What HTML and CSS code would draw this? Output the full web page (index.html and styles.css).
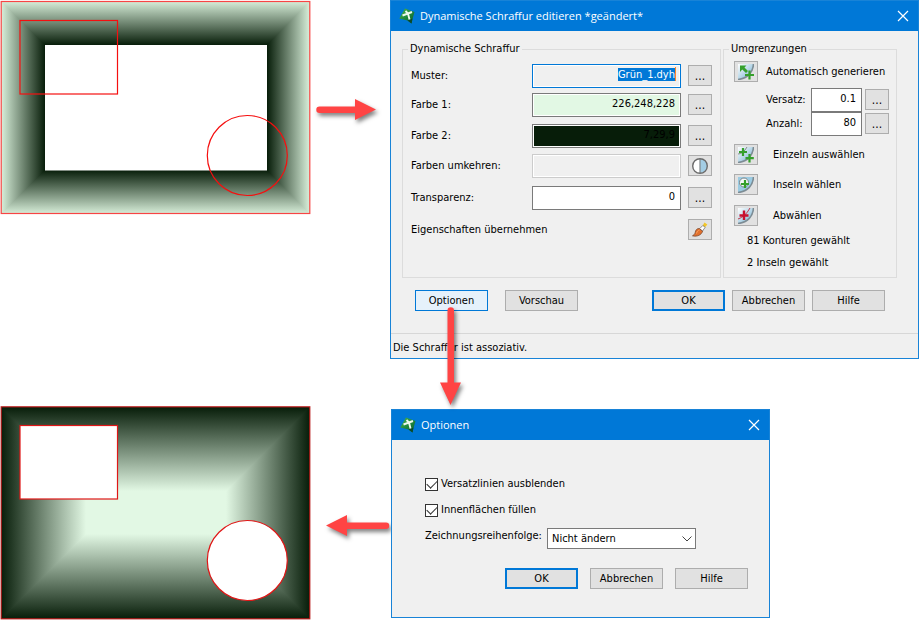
FILE: index.html
```html
<!DOCTYPE html>
<html lang="de">
<head>
<meta charset="utf-8">
<title>Dynamische Schraffur</title>
<link rel="stylesheet" href="styles.css">
</head>
<body>
<svg class="defs" aria-hidden="true">
  <defs>
    <linearGradient id="leaf" x1="0" y1="0" x2="1" y2="1"><stop offset="0" stop-color="#4fb648"/><stop offset=".5" stop-color="#1f8a3c"/><stop offset="1" stop-color="#0c5a2c"/></linearGradient>
    <linearGradient id="bluefill" x1="0" y1="0" x2="1" y2="1"><stop offset="0" stop-color="#ffffff"/><stop offset=".75" stop-color="#8fc0da"/></linearGradient>
    <symbol id="app" viewBox="0 0 16 16">
      <path d="M6 .5L15.500 4L13.500 11L12.500 15.500L8.500 12.500L.3 10.500Z" fill="url(#leaf)"/>
      <path d="M8.500 12.500L13.500 10.500L12.500 15.500Z" fill="#0b4a2b"/>
      <path d="M6.500 3L9 5.500L10.500 11.500M3.500 7.500L9 5.500L13 4" fill="none" stroke="#edf8ef" stroke-width="1.900"/>
    </symbol>
    <symbol id="close" viewBox="0 0 12 12"><path d="M1 1L11 11M11 1L1 11" fill="none" stroke="#fff" stroke-width="1.200"/></symbol>
    <symbol id="sheet" viewBox="0 0 16 16">
      <path d="M0 0H16C15.500 7 11 14 0 16Z" fill="url(#bluefill)"/>
      <path d="M15.500 0C15 8 10 14.500 0 15.500" fill="none" stroke="#7d8c94" stroke-width="1.600"/>
    </symbol>
  </defs>
</svg>
<main class="page">
  <section class="stage">
    <svg class="drawing" viewBox="0 0 312 215" role="img" aria-label="Schraffur vorher">
      <defs>
        <linearGradient id="a-t" gradientUnits="userSpaceOnUse" x1="0" y1="1" x2="0" y2="45"><stop stop-color="#d9f0db"/><stop offset="1" stop-color="#071d09"/></linearGradient>
        <linearGradient id="a-b" gradientUnits="userSpaceOnUse" x1="0" y1="214" x2="0" y2="170"><stop stop-color="#d9f0db"/><stop offset="1" stop-color="#071d09"/></linearGradient>
        <linearGradient id="a-l" gradientUnits="userSpaceOnUse" x1="1" y1="0" x2="45" y2="0"><stop stop-color="#d9f0db"/><stop offset="1" stop-color="#071d09"/></linearGradient>
        <linearGradient id="a-r" gradientUnits="userSpaceOnUse" x1="310" y1="0" x2="267" y2="0"><stop stop-color="#d9f0db"/><stop offset="1" stop-color="#071d09"/></linearGradient>
      </defs>
      <g shape-rendering="crispEdges">
        <path d="M1 1H310L267 45H45Z" fill="url(#a-t)"/>
        <path d="M1 214H310L267 170H45Z" fill="url(#a-b)"/>
        <path d="M1 1L45 45V170L1 214Z" fill="url(#a-l)"/>
        <path d="M310 1L267 45V170L310 214Z" fill="url(#a-r)"/>
      </g>
      <rect x="45" y="45" width="222" height="125.500" fill="#fff"/>
      <g fill="none" stroke="#f50f0f" stroke-width="1.200">
        <rect x="1.200" y="1.500" width="308.600" height="212" stroke="#f74545"/>
        <rect x="20" y="20.500" width="97.500" height="73.500"/>
        <circle cx="247.300" cy="155.500" r="40"/>
      </g>
    </svg>
    <svg class="arrow arrow-right" viewBox="0 0 64 30" aria-hidden="true"><path d="M4.500 7.500H40V0L61 10.500L40 21V14H4.500A3.250 3.250 0 0 1 4.500 7.500Z"/></svg>
  </section>

  <form class="dialog dialog-main">
    <header class="titlebar">
      <svg class="app-icon" aria-hidden="true"><use href="#app"/></svg>
      <h1>Dynamische Schraffur editieren *geändert*</h1>
      <button type="button" class="close" aria-label="Schließen"><svg aria-hidden="true"><use href="#close"/></svg></button>
    </header>
    <div class="panels">
      <fieldset class="hatch">
        <legend>Dynamische Schraffur</legend>
        <div class="hatch-grid">
          <label for="muster">Muster:</label>
          <span class="caret-box"><input id="muster" class="field active" value="Grün_1.dyh"></span>
          <button type="button" class="tool" aria-label="Muster wählen">...</button>

          <label for="farbe1">Farbe 1:</label>
          <input id="farbe1" class="field light" value="226,248,228">
          <button type="button" class="tool" aria-label="Farbe 1 wählen">...</button>

          <label for="farbe2">Farbe 2:</label>
          <input id="farbe2" class="field dark" value="7,29,9">
          <button type="button" class="tool" aria-label="Farbe 2 wählen">...</button>

          <label for="umkehren">Farben umkehren:</label>
          <input id="umkehren" class="field" disabled>
          <button type="button" class="tool" aria-label="Farben umkehren">
            <svg viewBox="0 0 16 16" aria-hidden="true"><circle cx="8" cy="8" r="7.400" fill="#fff"/><path d="M8 .8A7.200 7.200 0 0 1 8 15.200Z" fill="#a3cde4"/><path d="M8 1V15" stroke="#7e8589" stroke-width="1.200"/><circle cx="8" cy="8" r="7.300" fill="none" stroke="#6b6b6b" stroke-width="1.400"/></svg>
          </button>

          <label for="transparenz">Transparenz:</label>
          <input id="transparenz" class="field" value="0">
          <button type="button" class="tool" aria-label="Transparenz wählen">...</button>

          <label class="wide" for="pinsel">Eigenschaften übernehmen</label>
          <button type="button" id="pinsel" class="tool">
            <svg viewBox="0 0 16 16" aria-hidden="true"><path d="M12.500 .5L15.300 2.500L12.500 6L10.300 4.300Z" fill="#f3c626"/><path d="M10.800 3.500L13.200 5.300L10.500 9L7.500 6.800Z" fill="#fff" stroke="#777" stroke-width=".8"/><path d="M7.200 6.500C4.500 6.500 3.500 8.500 3.200 10.500C2.800 12.500 1.500 13.200 .5 13.800C5 15 9.500 13 10.600 9.200Z" fill="#e2702d" stroke="#7a4a32" stroke-width=".8"/><path d="M4.500 11.500C5 9.500 6 8.500 7.500 8" fill="none" stroke="#f7a463"/></svg>
          </button>
        </div>
      </fieldset>
      <fieldset class="bounds">
        <legend>Umgrenzungen</legend>
        <div class="bounds-grid">
          <button type="button" id="auto" class="tool">
            <svg viewBox="0 0 16 16" aria-hidden="true"><use href="#sheet"/><path d="M2 1.500H8.500L6.500 3.500L10 7L8 9L4.300 5.500L2 8Z" fill="#35a02c"/><path d="M11.500 6.500V15.500M7 11H16" stroke="#35a02c" stroke-width="2.200"/></svg>
          </button>
          <label class="near" for="auto">Automatisch generieren</label>

          <label class="sub" for="versatz">Versatz:</label>
          <input id="versatz" class="field" value="0.1">
          <button type="button" class="tool" aria-label="Versatz wählen">...</button>

          <label class="sub" for="anzahl">Anzahl:</label>
          <input id="anzahl" class="field" value="80">
          <button type="button" class="tool" aria-label="Anzahl wählen">...</button>

          <button type="button" id="einzeln" class="tool">
            <svg viewBox="0 0 16 16" aria-hidden="true"><use href="#sheet"/><path d="M0 7Q5 7 9 0" fill="none" stroke="#888"/><path d="M5 1V9M1 5H9M11.500 7V15.500M7.500 11.200H15.800" stroke="#35a02c" stroke-width="2.200"/></svg>
          </button>
          <label class="far" for="einzeln">Einzeln auswählen</label>

          <button type="button" id="inseln" class="tool">
            <svg viewBox="0 0 16 16" aria-hidden="true"><path d="M0 0H16C15.500 7 11 14 0 16Z" fill="#9bcbe2"/><path d="M15.500 0C15 8 10 14.500 0 15.500" fill="none" stroke="#7d8c94" stroke-width="1.600"/><circle cx="6" cy="5.500" r="4.500" fill="#f3f8f8" stroke="#7b8488"/><path d="M7 3V11M3 7H11" stroke="#35a02c" stroke-width="2.200"/></svg>
          </button>
          <label class="far" for="inseln">Inseln wählen</label>

          <button type="button" id="abwahl" class="tool">
            <svg viewBox="0 0 16 16" aria-hidden="true"><use href="#sheet"/><path d="M0 11Q7 9 12 0" fill="none" stroke="#c13a4b"/><path d="M6 2.500V12M1.500 7.500H10.500" stroke="#c8102e" stroke-width="2.400"/></svg>
          </button>
          <label class="far" for="abwahl">Abwählen</label>

          <p class="count">81 Konturen gewählt</p>
          <p class="count">2 Inseln gewählt</p>
        </div>
      </fieldset>
    </div>
    <div class="actions">
      <button type="button" class="btn hot">Optionen</button>
      <button type="button" class="btn">Vorschau</button>
      <div class="confirm">
        <button type="button" class="btn default">OK</button>
        <button type="button" class="btn">Abbrechen</button>
        <button type="button" class="btn">Hilfe</button>
      </div>
    </div>
    <footer class="status">Die Schraffur ist assoziativ.</footer>
    <svg class="arrow arrow-down" viewBox="0 0 30 104" aria-hidden="true"><path d="M7.500 4.500V76.500H0L10.500 99L21 76.500H14V4.500A3.250 3.250 0 0 0 7.500 4.500Z"/></svg>
  </form>

  <section class="stage">
    <svg class="drawing" viewBox="0 0 312 215" role="img" aria-label="Schraffur nachher">
      <defs>
        <linearGradient id="b-t" gradientUnits="userSpaceOnUse" x1="0" y1="1" x2="0" y2="85"><stop stop-color="#071d09"/><stop offset="1" stop-color="#e2f8e4"/></linearGradient>
        <linearGradient id="b-b" gradientUnits="userSpaceOnUse" x1="0" y1="213" x2="0" y2="128"><stop stop-color="#071d09"/><stop offset="1" stop-color="#e2f8e4"/></linearGradient>
        <linearGradient id="b-l" gradientUnits="userSpaceOnUse" x1="1" y1="0" x2="86" y2="0"><stop stop-color="#071d09"/><stop offset="1" stop-color="#e2f8e4"/></linearGradient>
        <linearGradient id="b-r" gradientUnits="userSpaceOnUse" x1="310" y1="0" x2="226" y2="0"><stop stop-color="#071d09"/><stop offset="1" stop-color="#e2f8e4"/></linearGradient>
      </defs>
      <g shape-rendering="crispEdges">
        <path d="M1 1H310L226 85H86Z" fill="url(#b-t)"/>
        <path d="M1 213H310L226 128H86Z" fill="url(#b-b)"/>
        <path d="M1 1L86 85V128L1 213Z" fill="url(#b-l)"/>
        <path d="M310 1L226 85V128L310 213Z" fill="url(#b-r)"/>
        <rect x="86" y="85" width="140" height="43" fill="#e2f8e4"/>
      </g>
      <g fill="#fff" stroke="#e01616" stroke-width="1.200">
        <rect x="1.200" y=".8" width="308.600" height="212" fill="none" stroke="#b81c1c"/>
        <rect x="20" y="19.500" width="97.500" height="73.500"/>
        <circle cx="247.300" cy="154.500" r="40"/>
      </g>
    </svg>
    <svg class="arrow arrow-left" viewBox="0 0 68 30" aria-hidden="true"><path d="M60 7.500H21V0L0 10.500L21 21V14H60A3.250 3.250 0 0 0 60 7.500Z"/></svg>
  </section>

  <form class="dialog dialog-options">
    <header class="titlebar">
      <svg class="app-icon" aria-hidden="true"><use href="#app"/></svg>
      <h2>Optionen</h2>
      <button type="button" class="close" aria-label="Schließen"><svg aria-hidden="true"><use href="#close"/></svg></button>
    </header>
    <div class="options">
      <label class="check"><input type="checkbox" checked>Versatzlinien ausblenden</label>
      <label class="check"><input type="checkbox" checked>Innenflächen füllen</label>
      <div class="order">
        <label for="order">Zeichnungsreihenfolge:</label>
        <span class="select-box">
          <select id="order"><option>Nicht ändern</option></select>
          <svg viewBox="0 0 10 6" aria-hidden="true"><path d="M.5 .5L5 5L9.500 .5" fill="none" stroke="#444"/></svg>
        </span>
      </div>
    </div>
    <div class="option-actions">
      <button type="button" class="btn default">OK</button>
      <button type="button" class="btn">Abbrechen</button>
      <button type="button" class="btn">Hilfe</button>
    </div>
  </form>
</main>
<script src="script.js"></script>
</body>
</html>
```

FILE: styles.css
```css
* {
  box-sizing: border-box;
}

body {
  margin: 0;
  background: #fff;
  color: #000;
  font-family: "DejaVu Sans Condensed", "Open Sans", sans-serif;
  font-size: 11px;
  line-height: 14px;
}

button,
input,
select {
  margin: 0;
  font: inherit;
  color: inherit;
}

.defs {
  position: absolute;
  width: 0;
  height: 0;
}

.page {
  display: grid;
  grid-template-columns: 390px minmax(0, 1fr);
  row-gap: 47px;
  align-items: start;
}

.stage {
  display: flex;
  align-items: flex-start;
}

.drawing {
  width: 312px;
  height: 215px;
  flex: none;
}

.arrow {
  fill: #ff4444;
  overflow: visible;
  filter: drop-shadow(2px 3px 2px rgba(0, 0, 0, .5));
}

.arrow-right {
  width: 64px;
  height: 30px;
  margin: 99px 0 0 3px;
}

.arrow-left {
  width: 68px;
  height: 30px;
  margin: 109px 0 0 14px;
}

.arrow-down {
  position: absolute;
  left: 49px;
  top: 305px;
  width: 30px;
  height: 104px;
  z-index: 2;
}

.dialog {
  position: relative;
  border: 1px solid #1883d7;
  background: #f0f0f0;
}

.titlebar {
  display: flex;
  align-items: center;
  gap: 5px;
  height: 30px;
  padding-left: 8px;
  background: #0078d7;
  color: #fff;
}

.titlebar h1,
.titlebar h2 {
  flex: 1;
  margin: 0;
  font-family: "Open Sans", sans-serif;
  font-size: 11px;
  font-weight: 400;
  line-height: 16px;
  white-space: nowrap;
}

.app-icon {
  width: 16px;
  height: 16px;
}

.close {
  width: 30px;
  height: 30px;
  padding: 0;
  border: 0;
  background: none;
}

.close svg {
  display: block;
  width: 12px;
  height: 12px;
  margin: auto;
}

.panels {
  display: grid;
  grid-template-columns: minmax(0, 1fr) 174px;
  gap: 2px;
  padding: 11px 21px 0 11px;
}

fieldset {
  min-width: 0;
  height: 236px;
  margin: 0;
  padding: 0 8px;
  border: 1px solid #dcdcdc;
}

legend {
  padding: 0 2px;
  margin-left: -3px;
  white-space: nowrap;
}

label {
  line-height: 24px;
  white-space: nowrap;
}

.hatch-grid {
  display: grid;
  grid-template-columns: 121px minmax(0, 1fr) 24px;
  grid-template-rows: 29px 31px 30px 32px 32px 24px;
  column-gap: 7px;
  align-items: start;
  padding-top: 8px;
}

.hatch-grid label {
  margin-right: -7px;
}

.hatch-grid .field {
  margin-left: -7px;
  width: calc(100% + 7px);
}

.hatch-grid .wide {
  grid-column: 1 / 3;
}

.field {
  display: block;
  width: 100%;
  height: 24px;
  padding: 0 5px 4px;
  border: 1px solid #7a7a7a;
  border-radius: 0;
  background: #fff;
  box-shadow: inset 0 0 0 1px #fff;
  text-align: right;
  outline: 0;
}

.field.active {
  border-color: #0078d7;
  background: #f0f0f0;
}

.field.active::selection {
  background: #0078d7;
  color: #fff;
}

.field.light {
  background: #e2f8e4;
}

.field.dark {
  background: #071d09;
  color: #000;
}

.field:disabled {
  border-color: #ccc;
  background: #f0f0f0;
}

.caret-box {
  position: relative;
}

.caret-box::after {
  content: "";
  position: absolute;
  right: 5px;
  top: 3px;
  width: 1px;
  height: 14px;
  background: #ff8728;
}

.tool {
  display: flex;
  align-items: center;
  justify-content: center;
  width: 24px;
  height: 21px;
  margin-top: 1px;
  padding: 0;
  border: 1px solid #adadad;
  background: #e1e1e1;
  font-size: 12px;
}

.tool svg {
  width: 16px;
  height: 16px;
}

.bounds {
  padding: 0 7px 0 10px;
}

.bounds legend {
  margin-left: -5px;
}

.bounds-grid {
  display: grid;
  grid-template-columns: 32px 45px minmax(0, 1fr) 24px;
  grid-template-rows: 28px 24px 31px 30px 31px 25px 22px;
  align-items: start;
  padding-top: 4px;
}

.bounds-grid .field {
  width: calc(100% - 3px);
}

.bounds-grid .near,
.bounds-grid .far {
  grid-column: 2 / 5;
}

.bounds-grid .far {
  padding-left: 7px;
}

.bounds-grid .sub {
  grid-column: 2;
}

.count {
  grid-column: 1 / 5;
  margin: 0;
  padding-left: 13px;
  line-height: 24px;
}

.actions {
  display: flex;
  gap: 17px;
  padding: 12px 33px 22px 24px;
}

.confirm {
  display: flex;
  gap: 7px;
  margin-left: auto;
}

.btn {
  width: 73px;
  height: 21px;
  padding: 0;
  border: 1px solid #adadad;
  background: #e1e1e1;
  line-height: 20px;
}

.btn.hot {
  border-color: #0078d7;
  background: #e5f1fb;
}

.btn.default {
  border: 2px solid #0078d7;
  line-height: 18px;
}

.status {
  height: 25px;
  padding-left: 2px;
  border-top: 1px solid #d7d7d7;
  line-height: 28px;
}

.dialog-options {
  max-width: 379px;
  margin: 3px 0 0 1px;
}

.options {
  display: flex;
  flex-direction: column;
  gap: 2px;
  padding: 32px 33px 0;
}

.check {
  display: flex;
  align-items: center;
  gap: 3px;
}

.check input {
  appearance: none;
  width: 13px;
  height: 13px;
  border: 1px solid #333;
  background: #fff;
}

.check input:checked::after {
  content: "";
  display: block;
  width: 9px;
  height: 5px;
  margin: 1px 0 0 1px;
  border-left: 1px solid #333;
  border-bottom: 1px solid #333;
  transform: rotate(-45deg);
}

.order {
  display: flex;
  align-items: flex-start;
}

.order label {
  width: 122px;
}

.select-box {
  position: relative;
  margin-top: 4px;
}

.select-box select {
  display: block;
  appearance: none;
  width: 149px;
  height: 21px;
  padding: 0 20px 0 4px;
  border: 1px solid #7a7a7a;
  border-radius: 0;
  background: #fff;
}

.select-box svg {
  position: absolute;
  right: 4px;
  top: 8px;
  width: 10px;
  height: 6px;
  pointer-events: none;
}

.option-actions {
  display: flex;
  justify-content: flex-end;
  gap: 12px;
  padding: 19px 21px 28px;
}
```

FILE: script.js
```js
const pattern = document.getElementById("muster");
pattern.focus({ preventScroll: true });
pattern.select();
```
